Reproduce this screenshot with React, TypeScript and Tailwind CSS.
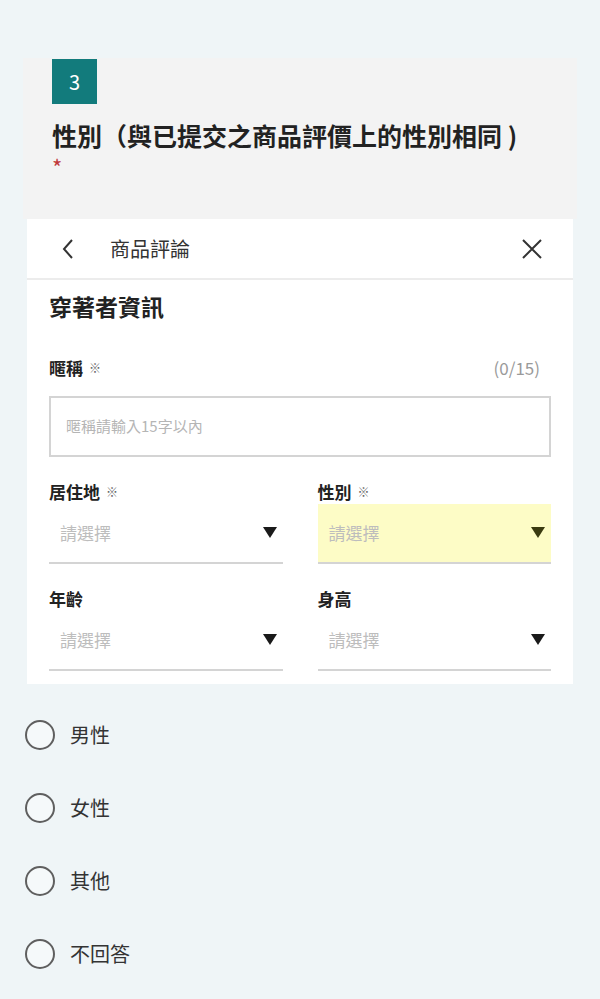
import React from 'react';

const font = { fontFamily: '"Noto Sans CJK TC", "Noto Sans", sans-serif' };

function Select({ highlight }: { highlight?: boolean }) {
  return (
    <div
      className={`flex h-[60px] items-center justify-between border-b-2 border-[#d4d4d4] pl-[11px] pr-[6px] ${
        highlight ? 'bg-[#fdfcc6]' : ''
      }`}
    >
      <span className="text-[17px] text-[#bdbdbd]">請選擇</span>
      <svg width="14" height="11" viewBox="0 0 14 11">
        <path d="M0 0 H14 L7 11 Z" fill={highlight ? '#3a3a10' : '#1a1a1a'} />
      </svg>
    </div>
  );
}

function FieldLabel({ text, required }: { text: string; required?: boolean }) {
  return (
    <div className="flex h-[24px] items-center gap-[6px]">
      <span className="text-[17px] font-bold leading-[24px] text-[#222]">{text}</span>
      {required && <span className="text-[12px] font-bold text-[#666]">※</span>}
    </div>
  );
}

function Radio({ label }: { label: string }) {
  return (
    <div className="flex h-[73px] items-center gap-[15px] pl-[25px]">
      <span className="h-[30px] w-[30px] rounded-full border-2 border-[#5f5f5f] bg-white/40" />
      <span className="text-[20px] text-[#333]">{label}</span>
    </div>
  );
}

export default function App() {
  return (
    <div style={font} className="min-h-[999px] w-[600px] bg-[#eff5f7] pt-[58px]">
      <div className="mx-[23px] bg-[#f3f3f3] pb-[47px] pl-[29px] pt-[1px]">
        <div className="flex h-[45px] w-[45px] items-center justify-center bg-[#127b7c] text-[20px] text-white">
          3
        </div>
        <div className="mt-[14px] text-[25px] font-bold leading-[34px] text-[#222]">
          性別（與已提交之商品評價上的性別相同 )
        </div>
        <div className="h-[20px] text-[22px] leading-[28px] text-[#c0393b]">*</div>
      </div>

      <div className="mx-[27px] bg-white pb-[13px]">
        <div className="flex h-[61px] items-center border-b-2 border-[#ececec] pl-[34px] pr-[30px]">
          <svg width="14" height="22" viewBox="0 0 14 22" className="mr-[35px]">
            <path d="M11 2 L3 11 L11 20" fill="none" stroke="#333" strokeWidth="2" />
          </svg>
          <span className="flex-1 text-[20px] text-[#333]">商品評論</span>
          <svg width="22" height="22" viewBox="0 0 22 22">
            <path d="M2 2 L20 20 M20 2 L2 20" fill="none" stroke="#333" strokeWidth="2" />
          </svg>
        </div>

        <div className="px-[22px]">
          <div className="mt-[11px] text-[23px] font-bold leading-[30px] text-[#222]">穿著者資訊</div>

          <div className="mt-[34px] flex items-center justify-between">
            <FieldLabel text="暱稱" required />
            <span className="mr-[11px] text-[17px] text-[#9a9a9a]">(0/15)</span>
          </div>

          <div className="mt-[15px] flex h-[61px] items-center border-2 border-[#d4d4d4] px-[15px] text-[15px] text-[#b5b5b5]">
            暱稱請輸入15字以內
          </div>

          <div className="mt-[23px] grid grid-cols-2 gap-x-[35px]">
            <div>
              <FieldLabel text="居住地" required />
              <Select />
            </div>
            <div>
              <FieldLabel text="性別" required />
              <Select highlight />
            </div>
          </div>

          <div className="mt-[23px] grid grid-cols-2 gap-x-[35px]">
            <div>
              <FieldLabel text="年齡" />
              <Select />
            </div>
            <div>
              <FieldLabel text="身高" />
              <Select />
            </div>
          </div>
        </div>
      </div>

      <div className="mt-[15px]">
        <Radio label="男性" />
        <Radio label="女性" />
        <Radio label="其他" />
        <Radio label="不回答" />
      </div>
    </div>
  );
}
